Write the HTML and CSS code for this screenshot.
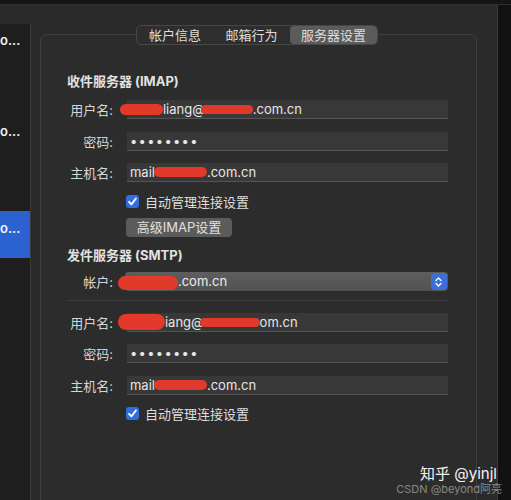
FILE: index.html
```html
<!DOCTYPE html>
<html lang="zh-CN">

<head>
    <meta charset="UTF-8">
    <meta name="viewport" content="width=device-width, initial-scale=1.0">
    <title>服务器设置</title>
    <link rel="stylesheet" href="styles.css">
</head>

<body>
    <div class="topbar"></div>

    <div class="window">
        <!-- 左边的帐户列表，只露出一点点 -->
        <aside class="sidebar">
            <div class="acct acct-first">o...</div>
            <div class="acct acct-second">o...</div>
            <div class="acct acct-active">o...</div>
        </aside>

        <main class="pane">
            <section class="group">
                <nav class="tabs">
                    <span class="tab tab-a">帐户信息</span>
                    <span class="tab tab-b">邮箱行为</span>
                    <span class="tab tab-c active">服务器设置</span>
                </nav>

                <div class="content">
                    <h2 class="head head-imap">收件服务器 (IMAP)</h2>

                    <div class="row row-1">
                        <label class="lbl">用户名:</label>
                        <div class="field"><span class="blob b-u1"></span>liang@<span class="blob b-u2"></span>.com.cn</div>
                    </div>
                    <div class="row row-2">
                        <label class="lbl">密码:</label>
                        <div class="field dots">••••••••</div>
                    </div>
                    <div class="row row-3">
                        <label class="lbl">主机名:</label>
                        <div class="field">mail<span class="blob b-h"></span>.com.cn</div>
                    </div>
                    <div class="check check-1">
                        <span class="box"><svg width="13" height="13" viewBox="0 0 13 13"><path d="M3 6.8 L5.4 9.4 L10 3.4" fill="none" stroke="#fff" stroke-width="1.8" stroke-linecap="round" stroke-linejoin="round"/></svg></span>
                        <span>自动管理连接设置</span>
                    </div>
                    <button class="btn">高级IMAP设置</button>

                    <h2 class="head head-smtp">发件服务器 (SMTP)</h2>

                    <div class="row row-pop">
                        <label class="lbl">帐户:</label>
                        <div class="popup">
                            <span class="pop-text"><span class="blob b-p"></span>.com.cn</span>
                            <span class="stepper"><svg width="9" height="12" viewBox="0 0 9 12"><path d="M2 4.5 L4.5 2 L7 4.5 M2 7.5 L4.5 10 L7 7.5" fill="none" stroke="#fff" stroke-width="1.4" stroke-linecap="round" stroke-linejoin="round"/></svg></span>
                        </div>
                    </div>
                    <div class="sep"></div>

                    <div class="row row-4">
                        <label class="lbl">用户名:</label>
                        <div class="field"><span class="blob b-s1"></span>iang@<span class="blob b-s2"></span>om.cn</div>
                    </div>
                    <div class="row row-5">
                        <label class="lbl">密码:</label>
                        <div class="field dots">••••••••</div>
                    </div>
                    <div class="row row-6">
                        <label class="lbl">主机名:</label>
                        <div class="field">mail<span class="blob b-h"></span>.com.cn</div>
                    </div>
                    <div class="check check-2">
                        <span class="box"><svg width="13" height="13" viewBox="0 0 13 13"><path d="M3 6.8 L5.4 9.4 L10 3.4" fill="none" stroke="#fff" stroke-width="1.8" stroke-linecap="round" stroke-linejoin="round"/></svg></span>
                        <span>自动管理连接设置</span>
                    </div>
                </div>
            </section>
        </main>

        <div class="edge"></div>
    </div>

    <!-- 图片上的水印 -->
    <div class="watermark">
        <div class="wm-zhihu">知乎 @yinjl</div>
        <div class="wm-csdn">CSDN @beyond阿亮</div>
    </div>
</body>

</html>
```

FILE: styles.css
```css
body {
    margin: 0;
    width: 511px;
    height: 500px;
    overflow: hidden;
    position: relative;
    background-color: #2a2a2a;
    color: #dcdcdc;
    font-family: Inter, "Noto Sans CJK SC", sans-serif;
    font-size: 13px;
}

.topbar {
    height: 5px;
    background-color: #151515;
    border-bottom: 1px solid #2f2f2f;
    box-sizing: border-box;
}

.window {
    display: flex;
    height: 495px;
}

/* 左边栏 */
.sidebar {
    width: 30px;
    margin-top: 19px;
    background-color: #1e1e1e;
    border-right: 1px solid #3a3a3a;
    overflow: hidden;
}

.acct {
    color: #f2f2f2;
    font-weight: 600;
    line-height: 14px;
    white-space: nowrap;
    box-sizing: border-box;
}

.acct-first {
    height: 92px;
    padding-top: 9px;
}

.acct-second {
    height: 95px;
    padding-top: 8px;
}

.acct-active {
    height: 47px;
    padding-top: 10px;
    background-color: #2c62cf;
}

.pane {
    width: 467px;
    padding: 29px 0 0 9px;
    box-sizing: border-box;
}

.group {
    width: 437px;
    height: 480px;
    box-sizing: border-box;
    border: 1px solid #3e3e3e;
    border-radius: 6px;
    background-color: #2c2c2c;
}

.edge {
    width: 13px;
    border-left: 1px solid #3c3c3c;
    background-color: #121212;
}

/* 顶部的分段按钮 */
.tabs {
    display: flex;
    width: 242px;
    height: 20px;
    margin: -10px 0 0 95px;
    box-sizing: border-box;
    border: 1px solid #474747;
    border-radius: 5px;
    background-color: #2e2e2e;
    overflow: hidden;
}

.tab {
    display: flex;
    align-items: center;
    justify-content: center;
    color: #dedede;
    line-height: 18px;
}

.tab-a {
    width: 76px;
}

.tab-b {
    width: 77px;
}

.tab-c {
    flex: 1;
}

.tab.active {
    background-color: #5b5b5b;
    border-radius: 4px;
}

.content {
    padding-left: 26px;
}

.head {
    margin: 0;
    font-size: 13px;
    font-weight: 700;
    line-height: 16px;
    color: #e2e2e2;
}

.head-imap {
    margin-top: 28px;
}

.head-smtp {
    margin-top: 10px;
}

.row {
    display: flex;
    align-items: center;
    height: 19px;
}

.row-1 {
    margin-top: 11px;
}

.row-2 {
    margin-top: 13px;
}

.row-3 {
    margin-top: 12px;
}

.row-pop {
    margin-top: 9px;
}

.row-4 {
    margin-top: 12px;
}

.row-5 {
    margin-top: 12px;
}

.row-6 {
    margin-top: 13px;
}

.lbl {
    width: 60px;
    padding-right: 14px;
    box-sizing: border-box;
    text-align: right;
    color: #d6d6d6;
}

.field {
    width: 321px;
    height: 19px;
    padding-left: 3px;
    box-sizing: border-box;
    background-color: #383838;
    border-bottom: 1px solid #555555;
    color: #e6e6e6;
    line-height: 18px;
    white-space: nowrap;
}

.dots {
    font-size: 13px;
    letter-spacing: 1.3px;
    color: #e8e8e8;
}

/* 红色涂抹 */
.blob {
    display: inline-block;
    vertical-align: middle;
    background-color: #e23a2a;
    border-radius: 7px;
    position: relative;
    top: -1px;
}

.b-u1 {
    width: 43px;
    height: 11px;
    margin-left: -10px;
}

.b-u2 {
    width: 52px;
    height: 9px;
    margin-left: -4px;
}

.b-h {
    width: 53px;
    height: 10px;
    margin-left: -1px;
}

.b-p {
    width: 60px;
    height: 14px;
    margin-left: -9px;
    top: 1px;
}

.b-s1 {
    width: 47px;
    height: 16px;
    margin-left: -12px;
    border-radius: 9px;
}

.b-s2 {
    width: 60px;
    height: 9px;
    margin-left: -4px;
}

.popup {
    display: flex;
    align-items: center;
    width: 323px;
    height: 19px;
    margin-left: -2px;
    padding-left: 2px;
    box-sizing: border-box;
    border-radius: 4px;
    background: linear-gradient(#5e5e5e, #525252);
    color: #ededed;
}

.pop-text {
    white-space: nowrap;
    line-height: 19px;
}

.stepper {
    display: flex;
    align-items: center;
    justify-content: center;
    width: 16px;
    height: 17px;
    margin-left: auto;
    margin-right: 1px;
    border-radius: 4px;
    background-color: #3a6fd9;
}

.sep {
    width: 381px;
    height: 1px;
    margin-top: 9px;
    background-color: #3c3c3c;
}

.check {
    display: flex;
    align-items: center;
    height: 16px;
    margin-left: 59px;
    color: #dedede;
}

.check-1 {
    margin-top: 11px;
}

.check-2 {
    margin-top: 10px;
}

.check .box {
    display: flex;
    width: 13px;
    height: 13px;
    margin-right: 6px;
    border-radius: 3px;
    background-color: #2f6de0;
}

.btn {
    display: block;
    width: 106px;
    height: 19px;
    margin: 9px 0 0 59px;
    padding: 0;
    border: none;
    border-radius: 4px;
    background-color: #5b5b5b;
    color: #e0e0e0;
    font-family: Inter, "Noto Sans CJK SC", sans-serif;
    font-size: 13px;
    line-height: 19px;
}

.watermark {
    position: absolute;
    right: 9px;
    bottom: 5px;
    text-align: right;
}

.wm-zhihu {
    margin-right: 5px;
    color: #f4f4f4;
    font-size: 15px;
    line-height: 15px;
    margin-bottom: 2px;
}

.wm-csdn {
    color: rgba(200, 200, 200, 0.6);
    font-size: 11px;
    line-height: 12px;
}
```
